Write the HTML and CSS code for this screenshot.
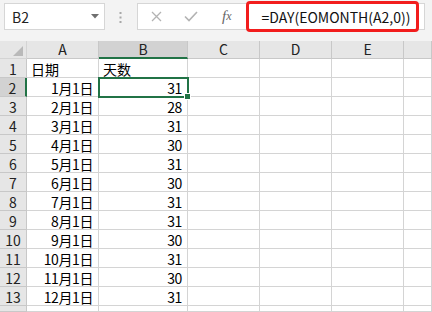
FILE: index.html
```html
<!DOCTYPE html>
<html lang="zh-CN">
<head>
    <meta charset="UTF-8">
    <title>EOMONTH</title>
    <link rel="stylesheet" href="styles.css">
</head>
<body>

<div class="toolbar">
    <div class="name-box">
        <span>B2</span>
        <svg class="caret" width="8" height="5" viewBox="0 0 8 5"><path d="M0 0 H8 L4 4.5 Z" fill="#6f6f6f"/></svg>
    </div>
    <svg class="grip" width="3" height="11" viewBox="0 0 3 11">
        <rect x="0.5" y="0" width="2" height="2" fill="#a8a8a8"/>
        <rect x="0.5" y="4.5" width="2" height="2" fill="#a8a8a8"/>
        <rect x="0.5" y="9" width="2" height="2" fill="#a8a8a8"/>
    </svg>
    <div class="formula-box">
        <span class="fb-btn cancel">
            <svg width="11" height="11" viewBox="0 0 11 11"><path d="M1 1 L10 10 M10 1 L1 10" stroke="#b3b3b3" stroke-width="1.3"/></svg>
        </span>
        <span class="fb-btn enter">
            <svg width="14" height="11" viewBox="0 0 14 11"><path d="M1 5.5 L5 9.5 L13 1" stroke="#b3b3b3" stroke-width="1.6" fill="none"/></svg>
        </span>
        <span class="fb-btn fx">f<i>x</i></span>
        <div class="formula-input">
            <span class="formula-text">=DAY(EOMONTH(A2,0))</span>
            <div class="highlight"></div>
        </div>
    </div>
</div>

<div class="sheet" id="sheet"></div>

<script>
    const columns = ['A', 'B', 'C', 'D', 'E', ''];
    const days = [31, 28, 31, 30, 31, 30, 31, 31, 30, 31, 30, 31];
    const sheet = document.getElementById('sheet');

    function cell(cls, text) {
        const el = document.createElement('div');
        el.className = cls;
        el.textContent = text || '';
        sheet.appendChild(el);
        return el;
    }

    // header row
    cell('corner');
    columns.forEach(c => cell('col-head' + (c === 'B' ? ' active' : ''), c));

    // row 1 = titles, rows 2..13 = months
    for (let r = 1; r <= 14; r++) {
        cell('row-head' + (r === 2 ? ' active' : ''), r <= 13 ? r : '');
        if (r === 1) {
            cell('c', '日期');
            cell('c', '天数');
        } else if (r <= 13) {
            cell('c num', (r - 1) + '月1日');
            cell('c num' + (r === 2 ? ' selected' : ''), days[r - 2]);
        } else {
            cell('c');
            cell('c');
        }
        for (let i = 0; i < 4; i++) cell('c');
    }
</script>

</body>
</html>
```

FILE: styles.css
```css
* {
    box-sizing: border-box;
    margin: 0;
    padding: 0;
}

body {
    width: 432px;
    height: 312px;
    overflow: hidden;
    background: #ffffff;
    font-family: 'Noto Sans CJK SC', 'Noto Sans', sans-serif;
    color: #000;
}

/* Toolbar */
.toolbar {
    height: 41px;
    background: #f3f3f3;
    display: flex;
    align-items: flex-start;
    padding: 3px 0 0 4px;
}

.name-box {
    width: 101px;
    height: 27px;
    background: #fff;
    border: 1px solid #d6d6d6;
    display: flex;
    align-items: center;
    justify-content: space-between;
    padding: 0 5px 0 7px;
    font-size: 14px;
    color: #222;
}

.grip {
    margin: 9px 0 0 14px;
}

.formula-box {
    margin-left: 15px;
    width: 288px;
    height: 27px;
    background: #fff;
    border: 1px solid #d6d6d6;
    display: flex;
    align-items: center;
}

.fb-btn {
    display: flex;
    align-items: center;
}

.cancel { margin-left: 13px; }
.enter { margin-left: 22px; }

.fx {
    margin-left: 24px;
    font-family: 'Liberation Serif', serif;
    font-style: italic;
    font-size: 15px;
    color: #666;
}

.fx i {
    font-size: 12px;
}

.formula-input {
    position: relative;
    flex: 1;
    height: 100%;
    margin-left: 14px;
    display: flex;
    align-items: center;
    padding-left: 16px;
    font-size: 14px;
    color: #111;
}

.highlight {
    position: absolute;
    left: 0;
    top: -3px;
    width: 173px;
    height: 31px;
    border: 3px solid #f21d1d;
    border-radius: 4px;
}

/* Sheet */
.sheet {
    display: grid;
    grid-template-columns: 27px 72px 89px 72px 72px 72px 1fr;
    grid-template-rows: 18px repeat(13, 19px) 1fr;
    height: 271px;
    font-size: 14px;
}

.sheet > div {
    border-right: 1px solid #d4d4d4;
    border-bottom: 1px solid #d4d4d4;
    white-space: nowrap;
}

.corner {
    background: #e6e6e6;
    position: relative;
}

.corner::after {
    content: '';
    position: absolute;
    right: 3px;
    bottom: 2px;
    border-left: 10px solid transparent;
    border-bottom: 10px solid #b9b9b9;
}

.col-head {
    background: #e6e6e6;
    text-align: center;
    line-height: 17px;
    color: #222;
    border-color: #c8c8c8 !important;
}

.col-head.active {
    background: #d2d2d2;
    border-bottom: 2px solid #217346 !important;
}

.row-head {
    background: #e6e6e6;
    text-align: center;
    line-height: 18px;
    padding-top: 1px;
    color: #222;
    border-color: #c8c8c8 !important;
}

.row-head.active {
    background: #d2d2d2;
    border-right: 2px solid #217346 !important;
}

.c {
    line-height: 18px;
    padding: 1px 4px 0 4px;
}

.num {
    text-align: right;
    letter-spacing: -0.4px;
    padding-right: 5px;
}

.sheet > .selected {
    position: relative;
}

.selected::after {
    content: '';
    position: absolute;
    left: -1px;
    top: -1px;
    right: -2px;
    bottom: -2px;
    border: 2px solid #217346;
}

.selected::before {
    content: '';
    position: absolute;
    right: -4px;
    bottom: -4px;
    width: 5px;
    height: 5px;
    background: #217346;
    border: 1px solid #fff;
    box-sizing: content-box;
    z-index: 1;
}
```
